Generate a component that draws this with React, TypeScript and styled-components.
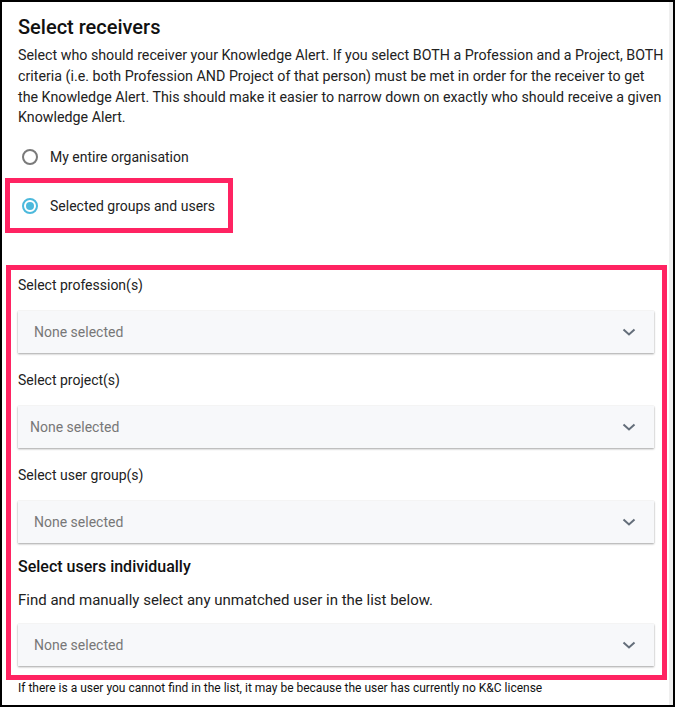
import React from "react";
import styled, { createGlobalStyle } from "styled-components";

const Global = createGlobalStyle`
  html, body { margin: 0; padding: 0; background: #fff; }
  body { font-family: Roboto, "Noto Sans", Arial, sans-serif; color: #212121; }
  * { box-sizing: border-box; }
`;

const Frame = styled.div`
  width: 675px;
  height: 707px;
  border: 2px solid #000;
  display: flex;
  overflow: hidden;
  background: #fff;
`;

const Content = styled.div`
  flex: 1;
  padding: 11px 2px 0 16px;
  display: flex;
  flex-direction: column;
  min-width: 0;
`;

const ScrollTrack = styled.div`
  width: 4px;
  background: #efefef;
`;

const Title = styled.h2`
  margin: 0;
  font-size: 20px;
  line-height: 28px;
  font-weight: 500;
  color: #111;
`;

const Intro = styled.p`
  margin: 4px 0 0;
  font-size: 14.25px;
  line-height: 20.8px;
  color: #222;
`;

const RadioRow = styled.label`
  display: flex;
  align-items: center;
  gap: 12px;
  height: 24px;
  font-size: 14px;
  color: #222;
`;

const FirstRadio = styled(RadioRow)`
  margin: 17px 0 0 4px;
`;

const Radio = styled.span<{ $checked?: boolean }>`
  width: 16px;
  height: 16px;
  border-radius: 50%;
  border: 2px solid ${(p) => (p.$checked ? "#4cb9dc" : "#7a7a7a")};
  display: flex;
  align-items: center;
  justify-content: center;
  flex: none;
  &::after {
    content: "";
    width: 8px;
    height: 8px;
    border-radius: 50%;
    background: ${(p) => (p.$checked ? "#4cb9dc" : "transparent")};
  }
`;

const HighlightSmall = styled.div`
  margin: 9px 0 0 -13px;
  width: 228px;
  height: 55px;
  border: 5px solid #ff2362;
  padding-left: 12px;
  display: flex;
  align-items: center;
`;

const HighlightLarge = styled.div`
  margin: 32px 0 0 -12px;
  border: 5px solid #ff2362;
  padding: 5px 8px 9px 7px;
  display: flex;
  flex-direction: column;
`;

const FieldLabel = styled.div`
  font-size: 14px;
  line-height: 20px;
  color: #222;
`;

const Select = styled.div<{ $inset: number }>`
  margin-top: 16px;
  margin-bottom: 17px;
  height: 42px;
  background: #f7f8fa;
  box-shadow: 0 1px 2px rgba(0, 0, 0, 0.35), 0 0 1px rgba(0, 0, 0, 0.12);
  display: flex;
  align-items: center;
  justify-content: space-between;
  padding: 0 18px 0 ${(p) => p.$inset}px;
  font-size: 14px;
  color: #777;
`;

const LastSelect = styled(Select)`
  margin-top: 13px;
  margin-bottom: 0;
`;

const SubHeading = styled.div`
  margin-top: -4px;
  font-size: 16px;
  line-height: 22px;
  font-weight: 500;
  color: #111;
`;

const SubText = styled.div`
  margin-top: 11px;
  font-size: 15px;
  line-height: 22px;
  color: #222;
`;

const Footnote = styled.div`
  font-size: 12px;
  line-height: 16px;
  color: #111;
`;

const Chevron = () => (
  <svg width="14" height="8" viewBox="0 0 14 8" fill="none">
    <path d="M1.5 1.5 L7 6.5 L12.5 1.5" stroke="#646e7a" strokeWidth="2" />
  </svg>
);

const Dropdown: React.FC<{ inset?: number; last?: boolean }> = ({ inset = 16, last }) => {
  const Comp = last ? LastSelect : Select;
  return (
    <Comp $inset={inset}>
      <span>None selected</span>
      <Chevron />
    </Comp>
  );
};

export default function App() {
  return (
    <>
      <Global />
      <Frame>
        <Content>
          <Title>Select receivers</Title>
          <Intro>
            Select who should receiver your Knowledge Alert. If you select BOTH a Profession and a
            Project, BOTH criteria (i.e. both Profession AND Project of that person) must be met in
            order for the receiver to get the Knowledge Alert. This should make it easier to narrow
            down on exactly who should receive a given Knowledge Alert.
          </Intro>
          <FirstRadio>
            <Radio />
            My entire organisation
          </FirstRadio>
          <HighlightSmall>
            <RadioRow>
              <Radio $checked />
              Selected groups and users
            </RadioRow>
          </HighlightSmall>
          <HighlightLarge>
            <FieldLabel>Select profession(s)</FieldLabel>
            <Dropdown />
            <FieldLabel>Select project(s)</FieldLabel>
            <Dropdown inset={12} />
            <FieldLabel>Select user group(s)</FieldLabel>
            <Dropdown />
            <SubHeading>Select users individually</SubHeading>
            <SubText>Find and manually select any unmatched user in the list below.</SubText>
            <Dropdown last />
          </HighlightLarge>
          <Footnote>
            If there is a user you cannot find in the list, it may be because the user has currently
            no K&amp;C license
          </Footnote>
        </Content>
        <ScrollTrack />
      </Frame>
    </>
  );
}
